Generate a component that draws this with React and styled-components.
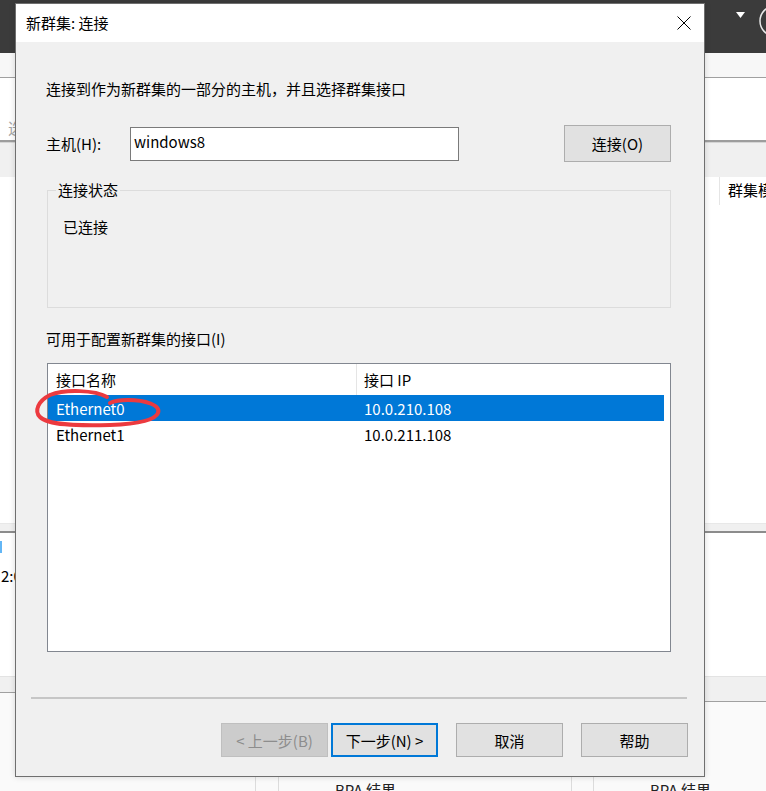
import React from 'react'
import styled, { createGlobalStyle } from 'styled-components'

const GlobalStyle = createGlobalStyle`
  html, body {
    margin: 0;
    padding: 0;
  }
  body {
    width: 766px;
    height: 791px;
    overflow: hidden;
    font-family: "Noto Sans CJK SC", "Noto Sans", sans-serif;
    font-size: 15px;
    color: #000;
  }
`

const Screen = styled.div`
  position: relative;
  width: 766px;
  height: 791px;
  overflow: hidden;
  background: #fafafa;
  display: flex;
  flex-direction: column;
`

/* ---- window behind the dialog ---- */

const TopBar = styled.div`
  height: 53px;
  flex: none;
  background: #3b3b3b;
  display: flex;
  justify-content: flex-end;
`

const Ribbon = styled.div`
  height: 24px;
  flex: none;
  background: #f7f7f7;
  border-bottom: 1px solid #a0a0a0;
`

const WhiteBand = styled.div`
  height: ${props => props.$h}px;
  flex: none;
  background: #fff;
  padding: ${props => props.$pad || '0'};
  box-sizing: border-box;
  line-height: 22px;
  color: ${props => props.$faded ? '#a5a5a5' : '#000'};
`

const ThickLine = styled.div`
  height: 1px;
  flex: none;
  border-top: 2px solid #9d9d9d;
  background: #d5d5d5;
`

const GrayBand = styled.div`
  height: 34px;
  flex: none;
  background: #f0f0f0;
`

const HeaderStrip = styled.div`
  height: 28px;
  flex: none;
  background: #fff;
  display: flex;
  justify-content: flex-end;
`

const HeaderCell = styled.div`
  width: 38px;
  padding-left: 8px;
  border-left: 1px solid #e5e5e5;
  line-height: 26px;
  white-space: nowrap;
  overflow: hidden;
`

const PaneSplit = styled.div`
  height: 7px;
  flex: none;
  background: #f0f0f0;
  border-top: 1px solid #e8e8e8;
  border-bottom: 2px solid #8c8c8c;
  box-sizing: content-box;
`

const LowerPane = styled.div`
  height: 143px;
  flex: none;
  background: #fff;
  box-sizing: border-box;
  padding-top: 8px;
`

const BlueMark = styled.div`
  width: 2px;
  height: 12px;
  background: #63b6f5;
`

const ClockText = styled.div`
  margin-top: 12px;
  line-height: 22px;
  padding-left: 1px;
`

const BottomHeader = styled.div`
  height: 28px;
  flex: none;
  display: flex;
  align-items: flex-start;
`

const HeaderBar = styled.div`
  flex: 1;
  height: ${props => props.$h}px;
  background: #f0f0f0;
  border-top: 1px solid #e3e3e3;
  border-bottom: 1px solid #a0a0a0;
`

const BottomGrid = styled.div`
  flex: 1;
  display: grid;
  grid-template-columns: 256px 23px 293px 22px 1fr;
`

const GridCell = styled.div`
  border-right: ${props => props.$last ? 'none' : '1px solid #dcdcdc'};
  padding: 75px 0 0 ${props => props.$text ? '56px' : '0'};
  line-height: 22px;
  color: #222;
  white-space: nowrap;
`

/* ---- dialog ---- */

const Dialog = styled.div`
  position: absolute;
  left: 15px;
  top: 3px;
  width: 690px;
  height: 774px;
  box-sizing: border-box;
  border: 1px solid #6f6f6f;
  background: #f0f0f0;
  display: flex;
  flex-direction: column;
  box-shadow: 0 0 6px rgba(0, 0, 0, 0.15);
`

const TitleBar = styled.div`
  height: 38px;
  flex: none;
  background: #fff;
  display: flex;
  align-items: center;
  justify-content: space-between;
  padding: 0 13px 0 10px;
`

const Title = styled.div`
  line-height: 22px;
`

const Body = styled.div`
  padding: 36px 33px 0 30px;
  display: flex;
  flex-direction: column;
`

const Text = styled.div`
  line-height: 22px;
  margin-top: ${props => props.$mt || 0}px;
`

const HostRow = styled.div`
  margin-top: 25px;
  height: 37px;
  display: flex;
  align-items: center;
`

const FieldLabel = styled.div`
  width: 84px;
  line-height: 22px;
`

const TextInput = styled.div`
  width: 329px;
  height: 34px;
  box-sizing: border-box;
  border: 1px solid #7a7a7a;
  background: #fff;
  padding: 0 3px;
  line-height: 28px;
`

const Button = styled.div`
  width: 107px;
  height: ${props => props.$h || 34}px;
  box-sizing: border-box;
  display: flex;
  align-items: center;
  justify-content: center;
  background: ${props => props.$disabled ? '#cccccc' : '#e1e1e1'};
  border: ${props => props.$default ? '2px solid #0078d7' : props.$disabled ? '1px solid #bfbfbf' : '1px solid #adadad'};
  color: ${props => props.$disabled ? '#8d8d8d' : '#000'};
  margin-left: ${props => props.$ml || 0};
  white-space: nowrap;
`

const GroupBox = styled.div`
  position: relative;
  margin-top: 28px;
  margin-left: 1px;
  height: 118px;
  box-sizing: border-box;
  border: 1px solid #dcdcdc;
  padding: 25px 0 0 15px;
  line-height: 22px;
`

const Legend = styled.span`
  position: absolute;
  top: -12px;
  left: 8px;
  padding: 0 2px;
  background: #f0f0f0;
  line-height: 22px;
`

const ListView = styled.div`
  margin-top: 13px;
  margin-left: 1px;
  height: 289px;
  box-sizing: border-box;
  border: 1px solid #828790;
  background: #fff;
`

const ListRow = styled.div`
  width: 616px;
  height: ${props => props.$header ? 31 : 26}px;
  display: grid;
  grid-template-columns: 309px 307px;
  align-items: center;
  background: ${props => props.$selected ? '#0078d7' : '#fff'};
  color: ${props => props.$selected ? '#fff' : '#000'};
`

const ListCell = styled.div`
  height: 100%;
  display: flex;
  align-items: center;
  box-sizing: border-box;
  padding-left: ${props => props.$first ? 8 : 7}px;
  border-right: ${props => props.$sep ? '1px solid #e5e5e5' : 'none'};
  white-space: nowrap;
`

const Footer = styled.div`
  margin-top: 45px;
  padding: 0 16px 0 15px;
`

const Divider = styled.div`
  height: 2px;
  margin-right: 1px;
  background: #c6c6c6;
`

const ButtonRow = styled.div`
  margin-top: 24px;
  display: flex;
  justify-content: flex-end;
`

const Annotation = styled.svg`
  position: absolute;
  left: 30px;
  top: 385px;
  pointer-events: none;
`

const interfaces = [
  { name: 'Ethernet0', ip: '10.0.210.108', selected: true },
  { name: 'Ethernet1', ip: '10.0.211.108', selected: false },
]

const App = () => {
  return (
    <Screen>
      <GlobalStyle />
      <TopBar>
        <svg width='40' height='53'>
          <polygon points='10,12 19,12 14.5,18' fill='#ffffff' />
          <circle cx='49' cy='21' r='15' fill='none' stroke='#e8e8e8' strokeWidth='1.5' />
        </svg>
      </TopBar>
      <Ribbon />
      <WhiteBand $h={62} $pad='39px 0 0 8px' $faded>{'选择'}</WhiteBand>
      <ThickLine />
      <GrayBand />
      <HeaderStrip>
        <HeaderCell>{'群集模'}</HeaderCell>
      </HeaderStrip>
      <WhiteBand $h={318} />
      <PaneSplit />
      <LowerPane>
        <BlueMark />
        <ClockText>{'2:00'}</ClockText>
      </LowerPane>
      <BottomHeader>
        <HeaderBar $h={15} />
        <HeaderBar $h={24} />
      </BottomHeader>
      <BottomGrid>
        <GridCell />
        <GridCell />
        <GridCell $text>{'BPA 结果'}</GridCell>
        <GridCell />
        <GridCell $text $last>{'BPA 结果'}</GridCell>
      </BottomGrid>

      <Dialog>
        <TitleBar>
          <Title>{'新群集: 连接'}</Title>
          <svg width='14' height='14' viewBox='0 0 14 14'>
            <path d='M0.5 0.5 L13.5 13.5 M13.5 0.5 L0.5 13.5' stroke='#000' strokeWidth='1' fill='none' />
          </svg>
        </TitleBar>
        <Body>
          <Text>{'连接到作为新群集的一部分的主机，并且选择群集接口'}</Text>
          <HostRow>
            <FieldLabel>{'主机(H):'}</FieldLabel>
            <TextInput>{'windows8'}</TextInput>
            <Button $h={37} $ml='auto'>{'连接(O)'}</Button>
          </HostRow>
          <GroupBox>
            <Legend>{'连接状态'}</Legend>
            {'已连接'}
          </GroupBox>
          <Text $mt={20}>{'可用于配置新群集的接口(I)'}</Text>
          <ListView>
            <ListRow $header>
              <ListCell $first $sep>{'接口名称'}</ListCell>
              <ListCell>{'接口 IP'}</ListCell>
            </ListRow>
            {interfaces.map(item => (
              <ListRow key={item.name} $selected={item.selected}>
                <ListCell $first>{item.name}</ListCell>
                <ListCell>{item.ip}</ListCell>
              </ListRow>
            ))}
          </ListView>
        </Body>
        <Footer>
          <Divider />
          <ButtonRow>
            <Button $disabled>{'< 上一步(B)'}</Button>
            <Button $default $ml='3px'>{'下一步(N) >'}</Button>
            <Button $ml='18px'>{'取消'}</Button>
            <Button $ml='18px'>{'帮助'}</Button>
          </ButtonRow>
        </Footer>
      </Dialog>

      <Annotation width='140' height='50' viewBox='0 0 140 50'>
        <path
          d='M77 12 C65 5, 35 4, 20 10 C8 16, 4 26, 10 32 C18 40, 45 41, 80 40 C105 39, 125 36, 128 28 C131 20, 115 15, 98 15 C90 15, 84 16, 80 18'
          fill='none'
          stroke='#ec3a3f'
          strokeWidth='4'
          strokeLinecap='round'
        />
      </Annotation>
    </Screen>
  )
}

export default App
